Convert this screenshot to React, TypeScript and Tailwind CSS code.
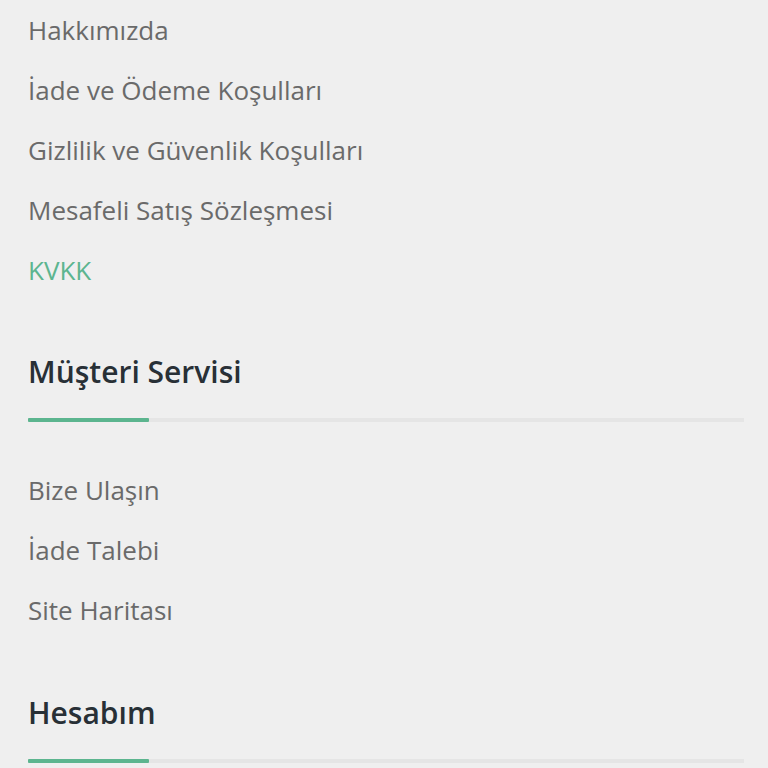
import React from "react";

const Item = ({ children, green }: { children: React.ReactNode; green?: boolean }) => (
  <li className={`h-[60px] flex items-center text-[26px] ${green ? "text-[#5cb58f]" : "text-[#6a6a6a]"}`}>
    {children}
  </li>
);

const Heading = ({ children }: { children: React.ReactNode }) => (
  <div>
    <h3 className="h-[40px] flex items-center text-[30px] font-semibold text-[#283036]">{children}</h3>
    <div className="mt-[27px] relative h-[4px] w-full bg-[#e5e5e5]">
      <div className="absolute left-0 top-0 h-[4px] w-[121px] bg-[#5cb58f] rounded-[1px]" />
    </div>
  </div>
);

export default function App() {
  return (
    <div
      className="w-[768px] h-[768px] overflow-hidden bg-[#efefef] pl-[28px] pr-[24px]"
      style={{ fontFamily: '"Open Sans", "Noto Sans", sans-serif' }}
    >
      <ul>
        <Item>Hakkımızda</Item>
        <Item>İade ve Ödeme Koşulları</Item>
        <Item>Gizlilik ve Güvenlik Koşulları</Item>
        <Item>Mesafeli Satış Sözleşmesi</Item>
        <Item green>KVKK</Item>
      </ul>
      <div className="mt-[51px]">
        <Heading>Müşteri Servisi</Heading>
      </div>
      <ul className="mt-[38px]">
        <Item>Bize Ulaşın</Item>
        <Item>İade Talebi</Item>
        <Item>Site Haritası</Item>
      </ul>
      <div className="mt-[52px]">
        <Heading>Hesabım</Heading>
      </div>
    </div>
  );
}
